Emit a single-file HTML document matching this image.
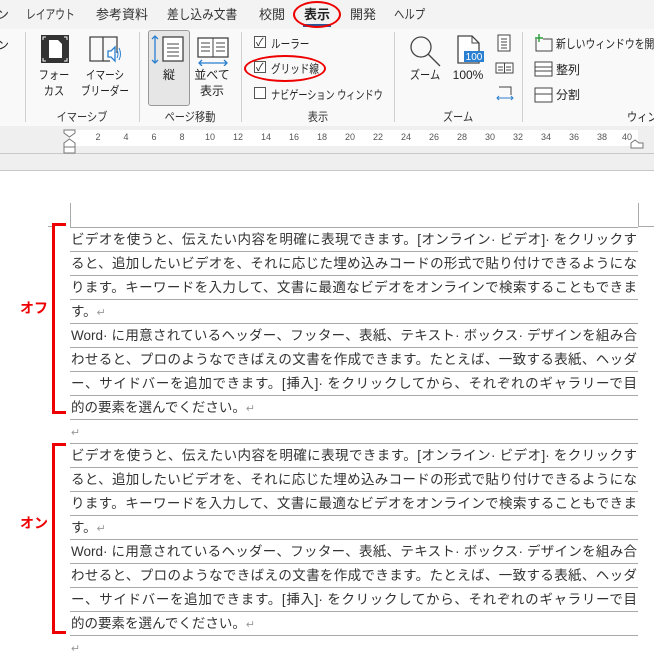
<!DOCTYPE html>
<html><head><meta charset="utf-8"><style>
*{margin:0;padding:0;box-sizing:border-box}
body{width:654px;height:650px;overflow:hidden;background:#fff;font-family:"Liberation Sans","Noto Sans CJK JP",sans-serif;color:#222;position:relative}
.a{position:absolute;white-space:nowrap}
.tab{position:absolute;top:4px;font-size:13px;color:#333;white-space:nowrap;transform-origin:left}
.sep{position:absolute;top:32px;width:1px;height:90px;background:#d0d0d0}
.gl{position:absolute;top:108px;font-size:12px;color:#333;transform:translateX(-50%) scaleX(.85);white-space:nowrap}
.lbl{font-size:12px;color:#222;position:absolute;text-align:center;line-height:16px;white-space:nowrap}
.cb{position:absolute;left:254px;width:12px;height:12px;border:1px solid #555;background:#fff}
.ctx{position:absolute;left:271px;font-size:12px;color:#222;white-space:nowrap;transform-origin:left}
.rn{position:absolute;top:132px;font-size:9px;color:#555;transform:translateX(-50%)}
.g{position:absolute;left:70px;width:568px;height:1px;background:#a8a8a8}
.row{position:absolute;left:71px;width:566px;font-size:13.5px;color:#333;text-align:justify;text-align-last:justify;height:24px;line-height:24px;white-space:nowrap;overflow:hidden}
.row.s{text-align-last:left}
.rt{color:#999;font-size:11px}
.br{position:absolute;left:52px;width:14px;border:3px solid #e00;border-right:none}
.red{position:absolute;left:20px;color:#e00;font-weight:bold;font-size:14px}
</style></head><body>
<div class="a" style="left:0;top:0;width:654px;height:29px;background:#f3f3f3"></div>
<div class="a" style="left:0;top:29px;width:654px;height:97px;background:#f9f9f9"></div>
<div class="tab" style="left:-4px">ン</div>
<div class="tab" style="left:26px;transform:scaleX(.75)">レイアウト</div>
<div class="tab" style="left:96px">参考資料</div>
<div class="tab" style="left:167px;transform:scaleX(.9)">差し込み文書</div>
<div class="tab" style="left:259px">校閲</div>
<div class="tab" style="left:304px;font-weight:bold;color:#222">表示</div>
<div class="a" style="left:303px;top:24px;width:28px;height:3px;background:#2b579a"></div>
<div class="a" style="left:293px;top:1px;width:48px;height:27px;border:2px solid #e00;border-radius:50%"></div>
<div class="tab" style="left:350px">開発</div>
<div class="tab" style="left:394px;transform:scaleX(.8)">ヘルプ</div>

<div class="a" style="left:-3px;top:36px;font-size:12px">ン</div>
<div class="sep" style="left:25px"></div>
<div class="sep" style="left:139px"></div>
<div class="sep" style="left:241px"></div>
<div class="sep" style="left:394px"></div>
<div class="sep" style="left:522px"></div>

<svg class="a" style="left:40px;top:34px" width="30" height="30"><rect x="1" y="1" width="28" height="28" fill="#333"/><path d="M9 6h9l4 4v14H9z" fill="#fff"/><path d="M3 6V3h3M24 3h3v3M3 24v3h3M27 24v3h-3" stroke="#fff" fill="none"/></svg>
<div class="lbl" style="left:34px;top:67px;width:40px;transform:scaleX(.85)">フォー<br>カス</div>
<svg class="a" style="left:88px;top:34px" width="34" height="30"><path d="M2 3h13v24H2zM15 3h14v16" fill="none" stroke="#444" stroke-width="1.3"/><path d="M15 27h7" stroke="#444" stroke-width="1.3"/><path d="M20 17h3l4-4v14l-4-4h-3z" fill="#fff" stroke="#2a7fd0" stroke-width="1.3"/><path d="M29 16q2 4 0 8M31 14q3 6 0 12" stroke="#2a7fd0" fill="none"/></svg>
<div class="lbl" style="left:74px;top:67px;width:62px;transform:scaleX(.8)">イマーシ<br>ブリーダー</div>
<div class="gl" style="left:82px">イマーシブ</div>

<div class="a" style="left:148px;top:30px;width:42px;height:76px;background:#e6e6e6;border:1px solid #999;border-radius:3px"></div>
<svg class="a" style="left:150px;top:34px" width="38" height="32"><path d="M5 2v27M2 5l3-3 3 3M2 26l3 3 3-3" stroke="#2a7fd0" fill="none" stroke-width="1.3"/><rect x="13" y="3" width="20" height="24" fill="#fff" stroke="#444" stroke-width="1.3"/><path d="M17 10h12M17 14h12M17 18h12M17 22h12" stroke="#444"/></svg>
<div class="lbl" style="left:158px;top:67px;width:22px">縦</div>
<svg class="a" style="left:196px;top:36px" width="34" height="30"><rect x="2" y="2" width="30" height="19" fill="#fff" stroke="#444" stroke-width="1.3"/><path d="M17 2v19M5 7h9M5 11h9M5 15h9M20 7h9M20 11h9M20 15h9" stroke="#444"/><path d="M3 27h28M6 24l-3 3 3 3M28 24l3 3-3 3" stroke="#2a7fd0" fill="none" stroke-width="1.3"/></svg>
<div class="lbl" style="left:194px;top:67px;width:36px">並べて<br>表示</div>
<div class="gl" style="left:190px">ページ移動</div>

<div class="cb" style="top:36px"></div><div class="a" style="left:256px;top:34px;font-size:11px">✓</div>
<div class="ctx" style="top:35px;transform:scaleX(.8)">ルーラー</div>
<div class="cb" style="top:61px"></div><div class="a" style="left:256px;top:59px;font-size:11px">✓</div>
<div class="ctx" style="top:60px;transform:scaleX(.8)">グリッド線</div>
<div class="a" style="left:244px;top:55px;width:82px;height:27px;border:2px solid #e00;border-radius:50%"></div>
<div class="cb" style="top:87px"></div>
<div class="ctx" style="top:86px;transform:scaleX(.76)">ナビゲーション ウィンドウ</div>
<div class="gl" style="left:318px">表示</div>

<svg class="a" style="left:408px;top:34px" width="34" height="34"><circle cx="13" cy="13" r="10" fill="none" stroke="#444" stroke-width="1.3"/><path d="M20 20l12 12" stroke="#444" stroke-width="1.3"/></svg>
<div class="lbl" style="left:405px;top:67px;width:40px;transform:scaleX(.85)">ズーム</div>
<svg class="a" style="left:455px;top:34px" width="32" height="32"><path d="M3 2h14l7 7v20H3z" fill="#fff" stroke="#444" stroke-width="1.3"/><path d="M17 2v7h7" fill="none" stroke="#444"/><rect x="9" y="17" width="20" height="11" fill="#2a7fd0"/><text x="19" y="26" font-size="10" fill="#fff" text-anchor="middle" font-family="Liberation Sans">100</text></svg>
<div class="lbl" style="left:448px;top:67px;width:40px">100%</div>
<svg class="a" style="left:495px;top:33px" width="20" height="72"><rect x="3" y="2" width="12" height="16" fill="#fff" stroke="#444"/><path d="M6 6h6M6 9h6M6 12h6M6 15h6" stroke="#444"/><rect x="1" y="30" width="17" height="10" fill="#fff" stroke="#444"/><path d="M9.5 30v10M3 34h5M3 37h5M11 34h5M11 37h5" stroke="#444"/><path d="M4 54h12v8" fill="none" stroke="#444"/><path d="M2 65h16M4 63l-2 2 2 2M16 63l2 2-2 2" stroke="#2a7fd0" fill="none"/></svg>
<div class="gl" style="left:458px">ズーム</div>

<svg class="a" style="left:534px;top:33px" width="20" height="72"><path d="M2 6v12h16V6h-9" fill="none" stroke="#444"/><path d="M5 1v8M1 5h8" stroke="#2a9d3a" stroke-width="1.4"/><rect x="1" y="29" width="17" height="14" fill="#fff" stroke="#444"/><path d="M1 34h17M1 38h17" stroke="#444"/><rect x="1" y="55" width="17" height="14" fill="#fff" stroke="#444"/><path d="M1 61h17" stroke="#444"/></svg>
<div class="a" style="left:556px;top:35px;font-size:12px;transform:scaleX(.82);transform-origin:left">新しいウィンドウを開く</div>
<div class="a" style="left:556px;top:61px;font-size:12px">整列</div>
<div class="a" style="left:556px;top:86px;font-size:12px">分割</div>
<div class="a" style="left:627px;top:108px;font-size:12px;transform:scaleX(.85);transform-origin:left">ウィン</div>

<div class="a" style="left:0;top:126px;width:654px;height:45px;background:#efefef"></div>
<div class="a" style="left:0;top:153px;width:654px;height:1px;background:#c8c8c8"></div>
<div class="a" style="left:0;top:170px;width:654px;height:1px;background:#c8c8c8"></div>
<div class="a" style="left:70px;top:130px;width:568px;height:16px;background:#fff"></div>
<svg class="a" style="left:63px;top:129px" width="14" height="25"><path d="M1 1h11v3l-5.5 4L1 4z" fill="#fff" stroke="#777"/><path d="M6.5 10L12 14v4H1v-4z M1 18h11v6H1z" fill="#fff" stroke="#777"/></svg>
<svg class="a" style="left:630px;top:139px" width="14" height="10"><path d="M1 9V4l4-3 4 3h4v5z" fill="#fff" stroke="#777"/></svg>
<div class="rn" style="left:98px">2</div><div class="rn" style="left:126px">4</div><div class="rn" style="left:154px">6</div><div class="rn" style="left:182px">8</div><div class="rn" style="left:210px">10</div><div class="rn" style="left:238px">12</div><div class="rn" style="left:266px">14</div><div class="rn" style="left:294px">16</div><div class="rn" style="left:322px">18</div><div class="rn" style="left:350px">20</div><div class="rn" style="left:378px">22</div><div class="rn" style="left:406px">24</div><div class="rn" style="left:434px">26</div><div class="rn" style="left:462px">28</div><div class="rn" style="left:490px">30</div><div class="rn" style="left:518px">32</div><div class="rn" style="left:546px">34</div><div class="rn" style="left:574px">36</div><div class="rn" style="left:602px">38</div><div class="rn" style="left:627px">40</div>

<div class="a" style="left:70px;top:203px;width:1px;height:24px;background:#aaa"></div>
<div class="a" style="left:48px;top:226px;width:5px;height:1px;background:#aaa"></div>
<div class="a" style="left:638px;top:203px;width:1px;height:24px;background:#aaa"></div>
<div class="a" style="left:638px;top:226px;width:16px;height:1px;background:#aaa"></div>

<div class="g" style="top:227px"></div><div class="g" style="top:251px"></div><div class="g" style="top:275px"></div><div class="g" style="top:299px"></div><div class="g" style="top:323px"></div><div class="g" style="top:347px"></div><div class="g" style="top:371px"></div><div class="g" style="top:395px"></div><div class="g" style="top:419px"></div><div class="g" style="top:443px"></div><div class="g" style="top:467px"></div><div class="g" style="top:491px"></div><div class="g" style="top:515px"></div><div class="g" style="top:539px"></div><div class="g" style="top:563px"></div><div class="g" style="top:587px"></div><div class="g" style="top:611px"></div><div class="g" style="top:635px"></div>

<div class="row" style="top:228px">ビデオを使うと、伝えたい内容を明確に表現できます。[オンライン· ビデオ]· をクリックす</div>
<div class="row" style="top:252px">ると、追加したいビデオを、それに応じた埋め込みコードの形式で貼り付けできるようにな</div>
<div class="row" style="top:276px">ります。キーワードを入力して、文書に最適なビデオをオンラインで検索することもできま</div>
<div class="row s" style="top:300px">す。<span class="rt">↵</span></div>
<div class="row" style="top:324px">Word· に用意されているヘッダー、フッター、表紙、テキスト· ボックス· デザインを組み合</div>
<div class="row" style="top:348px">わせると、プロのようなできばえの文書を作成できます。たとえば、一致する表紙、ヘッダ</div>
<div class="row" style="top:372px">ー、サイドバーを追加できます。[挿入]· をクリックしてから、それぞれのギャラリーで目</div>
<div class="row s" style="top:396px">的の要素を選んでください。<span class="rt">↵</span></div>
<div class="row s" style="top:420px"><span class="rt">↵</span></div>
<div class="row" style="top:444px">ビデオを使うと、伝えたい内容を明確に表現できます。[オンライン· ビデオ]· をクリックす</div>
<div class="row" style="top:468px">ると、追加したいビデオを、それに応じた埋め込みコードの形式で貼り付けできるようにな</div>
<div class="row" style="top:492px">ります。キーワードを入力して、文書に最適なビデオをオンラインで検索することもできま</div>
<div class="row s" style="top:516px">す。<span class="rt">↵</span></div>
<div class="row" style="top:540px">Word· に用意されているヘッダー、フッター、表紙、テキスト· ボックス· デザインを組み合</div>
<div class="row" style="top:564px">わせると、プロのようなできばえの文書を作成できます。たとえば、一致する表紙、ヘッダ</div>
<div class="row" style="top:588px">ー、サイドバーを追加できます。[挿入]· をクリックしてから、それぞれのギャラリーで目</div>
<div class="row s" style="top:612px">的の要素を選んでください。<span class="rt">↵</span></div>
<div class="row s" style="top:636px"><span class="rt">↵</span></div>

<div class="br" style="top:223px;height:191px"></div>
<div class="br" style="top:443px;height:191px"></div>
<div class="red" style="top:298px">オフ</div>
<div class="red" style="top:513px">オン</div>
</body></html>
